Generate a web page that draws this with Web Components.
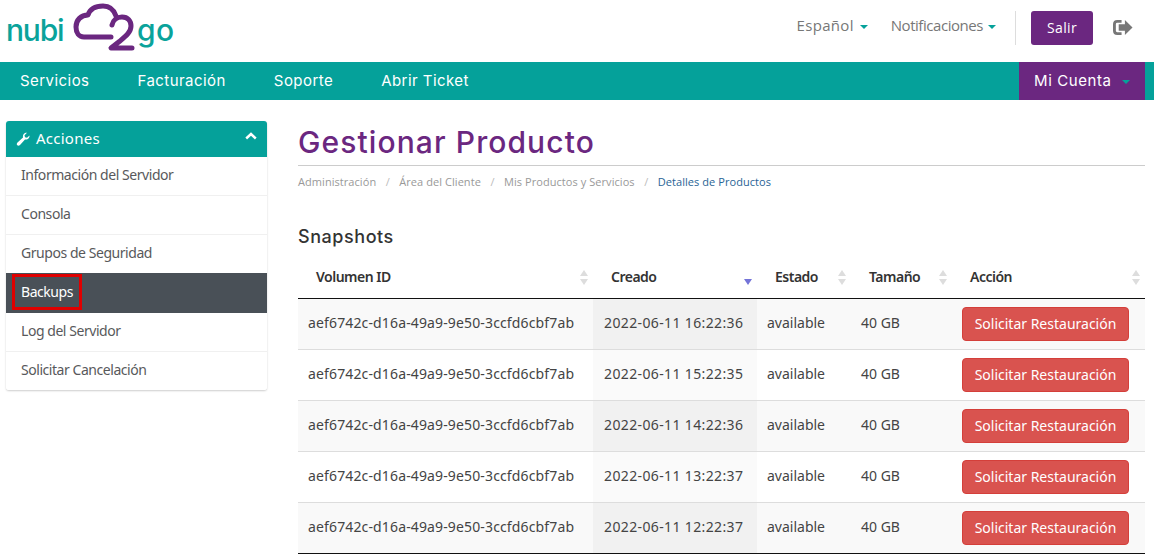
<!DOCTYPE html>
<html lang="es">
<head>
<meta charset="utf-8">
<title>Gestionar Producto</title>
<style>
    html, body { margin: 0; padding: 0; background: #fff; height: 559px; overflow: hidden; }
    body { font-family: "Noto Sans", sans-serif; color: #333; }
</style>
</head>
<body>
<template id="tpl-header">
<style>
    :host { display: block; height: 62px; }
    .bar { display: flex; align-items: flex-start; height: 62px; padding-right: 21px; box-sizing: border-box; }
    .logo { display: block; }
    .logo text { font-family: Inter, sans-serif; font-weight: 500; font-size: 30px; fill: #0aa39b; }
    .right { margin-left: auto; height: 56px; display: flex; align-items: center; font: 15px "Open Sans", sans-serif; color: #777; }
    .drop { display: flex; align-items: center; gap: 6px; margin-right: 19px; margin-top: -6px; }
    .lang { margin-right: 23px; letter-spacing: .3px; }
    .notif { letter-spacing: -.45px; gap: 5px; }
    .caret { width: 0; height: 0; border: 4px solid transparent; border-top-color: #05a19a; border-bottom: 0; margin-top: 4px; }
    .sep { width: 1px; height: 34px; background: #ddd; margin-right: 15px; }
    .salir { background: #6b2780; color: #fff; border-radius: 3px; width: 62px; height: 34px; padding-bottom: 2px; box-sizing: border-box; display: flex; align-items: center; justify-content: center; font-size: 14px; letter-spacing: .35px; margin-right: 20px; }
    svg.out { display: block; margin-top: -1px; }
</style>
<div class="bar">
    <svg class="logo" width="180" height="56" viewBox="0 0 180 56">
        <text x="6" y="41" letter-spacing="-1.2">nubi</text>
        <text x="137" y="41" letter-spacing=".5">go</text>
        <path d="M111 37H84c-5 0-8-4-8-10 0-7 5-12 12-12 2-6 8-9 15-9 7 0 11 4 13 10" fill="none" stroke="#6b2780" stroke-width="5" stroke-linecap="round" stroke-linejoin="round"/>
        <path d="M112 25c1-5 5-8 10-8 6 0 9 4 9 9 0 6-5 10-11 15l-9 7h21" fill="none" stroke="#6b2780" stroke-width="5" stroke-linecap="round" stroke-linejoin="round"/>
    </svg>
    <div class="right">
        <div class="drop lang">Español <span class="caret"></span></div>
        <div class="drop notif">Notificaciones <span class="caret"></span></div>
        <div class="sep"></div>
        <div class="salir">Salir</div>
        <svg class="out" width="20" height="17" viewBox="0 0 21 17">
            <path d="M9 2H4.500C2.500 2 1.500 3 1.500 5v7c0 2 1 3 3 3H9" fill="none" stroke="#777" stroke-width="3"/>
            <path d="M6 5h6.500V.5L20.500 8.500l-8 8V12H6z" fill="#777"/>
        </svg>
    </div>
</div>
</template>

<template id="tpl-nav">
<style>
    :host { display: flex; height: 38px; background: #05a19a; padding-right: 9px; font: 15px Inter, sans-serif; color: #fff; }
    .links { display: flex; gap: 48px; padding: 0 0 1px 20px; align-items: center; flex: 1; letter-spacing: .45px; }
    .acct { background: #6b2780; width: 126px; display: flex; align-items: center; gap: 10px; padding: 0 0 1px 15px; box-sizing: border-box; letter-spacing: .6px; }
    .caret { width: 0; height: 0; border: 4px solid transparent; border-top-color: #05a19a; border-bottom: 0; margin-top: 3px; }
</style>
<div class="links"><slot></slot></div>
<div class="acct">Mi Cuenta <span class="caret"></span></div>
</template>

<template id="tpl-panel">
<style>
    :host { display: block; width: 261px; margin: 21px 0 0 6px; border-radius: 3px; box-shadow: 0 1px 2px rgba(0,0,0,.2); font: 14px "Noto Sans", sans-serif; letter-spacing: -.45px; color: #58595b; }
    .head { background: #05a19a; color: #fff; height: 36px; border-radius: 3px 3px 0 0; display: flex; align-items: center; padding: 0 10px; font-size: 15px; letter-spacing: .25px; gap: 6px; }
    .head span { margin-top: -3px; }
    .head svg.up { margin-left: auto; margin-top: -6px; }
</style>
<div class="head">
    <svg width="14" height="14" viewBox="0 0 14 14"><path d="M13.500 3.500c.3 2-1.500 4.600-4.500 4L4 13c-1 1-2 1-2.700.3S.6 11.600 1.500 10.500L7 5.500C6.500 2.500 8.500.5 11 .7L8.500 3.300l.5 2 2 .5z" fill="#fff"/></svg>
    <span>Acciones</span>
    <svg class="up" width="12" height="8" viewBox="0 0 12 8"><path d="M1.200 6.500 6 2l4.800 4.500" fill="none" stroke="#fff" stroke-width="2.400"/></svg>
</div>
<slot></slot>
</template>

<template id="tpl-item">
<style>
    :host { display: flex; align-items: center; height: 38px; padding-left: 15px; background: #fff; border-bottom: 1px solid #f0f0f0; }
    :host([active]) { background: #495057; color: #fff; height: 40px; border-bottom: 0; margin-top: -1px; position: relative; }
    :host(:last-child) { border-bottom: 0; border-radius: 0 0 3px 3px; }
    .mark { display: flex; align-items: center; margin-top: -4px; }
    :host([marked]) .mark { outline: 3px solid #e00000; height: 30px; width: 64px; box-sizing: border-box; padding: 0 0 2px 6px; margin: -2px 0 0 -6px; }
</style>
<span class="mark"><slot></slot></span>
</template>

<template id="tpl-table">
<style>
    :host { display: block; font: 14px "Noto Sans", sans-serif; color: #444; }
    .grid { display: grid; grid-template-columns: 295px 164px 94px 101px 193px; }
</style>
<div class="grid"><slot></slot></div>
</template>

<template id="tpl-th">
<style>
    :host { display: flex; align-items: center; height: 42px; border-bottom: 1px solid #111; padding-left: 18px; padding-right: 5px; font-weight: 600; font-size: 14px; letter-spacing: -.5px; color: #333; margin-top: 8px; }
    .label { margin-top: -2px; }
    .sort { margin-left: auto; display: flex; flex-direction: column; gap: 3px; }
    .sort i { width: 0; height: 0; border: 4.500px solid transparent; display: block; }
    .sort .u { border-top: 0; border-bottom: 6px solid #ddd; }
    .sort .d { border-bottom: 0; border-top: 6px solid #ddd; }
    :host([sorted]) .sort .u { visibility: hidden; }
    :host([sorted]) .sort .d { border-top-color: #7474d8; }
</style>
<span class="label"><slot></slot></span>
<span class="sort"><i class="u"></i><i class="d"></i></span>
</template>

<template id="tpl-td">
<style>
    :host { display: flex; align-items: center; height: 50px; padding-left: 10px; border-bottom: 1px solid #ddd; background: #fff; }
    :host([odd]) { background: #f9f9f9; }
    :host([sorted]) { background: #fafafa; padding-left: 11px; letter-spacing: .37px; }
    :host([sorted][odd]) { background: #f1f1f1; }
    :host([code]) { letter-spacing: .14px; }
    :host([last]) { border-bottom-color: #111; }
    span { margin-top: -3px; }
    :host([action]) span { margin-top: -1px; }
</style>
<span><slot></slot></span>
</template>

<template id="tpl-btn">
<style>
    :host { display: flex; align-items: center; justify-content: center; width: 167px; height: 34px; background: #d9534f; color: #fff; border: 1px solid #d43f3a; border-radius: 4px; box-sizing: border-box; font-size: 14px; }
</style>
<slot></slot>
</template>

<template id="tpl-main">
<style>
    :host { display: flex; align-items: flex-start; }
    .content { margin-left: 31px; width: 847px; }
    h1 { margin: 22px 0 0; font: 500 30px Inter, sans-serif; letter-spacing: 1.1px; color: #6b2780; height: 43px; line-height: 41px; border-bottom: 1px solid #ccc; }
    .crumbs { display: flex; font: 11px "Open Sans", sans-serif; letter-spacing: .06px; color: #999; margin-top: 8px; height: 15px; align-items: center; }
    .crumbs span.s { margin: 0 9.500px; color: #bbb; }
    .crumbs .on { color: #2a6496; }
    h2 { margin: 37px 0 0; font: 500 18px Inter, sans-serif; letter-spacing: .55px; line-height: 22px; color: #333; }
</style>
<slot name="side"></slot>
<div class="content">
    <h1>Gestionar Producto</h1>
    <div class="crumbs"><span>Administración</span><span class="s">/</span><span>Área del Cliente</span><span class="s">/</span><span>Mis Productos y Servicios</span><span class="s">/</span><span class="on">Detalles de Productos</span></div>
    <h2>Snapshots</h2>
    <slot></slot>
</div>
</template>

<site-header></site-header>
<site-nav><span>Servicios</span><span>Facturación</span><span>Soporte</span><span>Abrir Ticket</span></site-nav>
<main-area>
    <side-panel slot="side">
        <side-item>Información del Servidor</side-item>
        <side-item>Consola</side-item>
        <side-item>Grupos de Seguridad</side-item>
        <side-item active marked>Backups</side-item>
        <side-item>Log del Servidor</side-item>
        <side-item>Solicitar Cancelación</side-item>
    </side-panel>
    <snap-table id="t"></snap-table>
</main-area>

<script>
    function plain(name, tplId) {
        const template = document.getElementById(tplId);
        customElements.define(name, class extends HTMLElement {
            constructor() {
                super();
                this.attachShadow({ mode: 'open' }).appendChild(template.content.cloneNode(true));
            }
        });
    }

    plain('site-header', 'tpl-header');
    plain('site-nav', 'tpl-nav');
    plain('side-panel', 'tpl-panel');
    plain('side-item', 'tpl-item');
    plain('main-area', 'tpl-main');
    plain('snap-table', 'tpl-table');
    plain('snap-th', 'tpl-th');
    plain('snap-td', 'tpl-td');
    plain('snap-btn', 'tpl-btn');

    const rows = [
        '2022-06-11 16:22:36', '2022-06-11 15:22:35', '2022-06-11 14:22:36',
        '2022-06-11 13:22:37', '2022-06-11 12:22:37'
    ];
    const table = document.getElementById('t');
    ['Volumen ID', 'Creado', 'Estado', 'Tamaño', 'Acción'].forEach((h, i) => {
        const th = document.createElement('snap-th');
        th.textContent = h;
        if (i === 1) th.setAttribute('sorted', '');
        table.appendChild(th);
    });
    rows.forEach((date, r) => {
        const cells = ['aef6742c-d16a-49a9-9e50-3ccfd6cbf7ab', date, 'available', '40 GB', null];
        cells.forEach((text, i) => {
            const td = document.createElement('snap-td');
            if (r % 2 === 0) td.setAttribute('odd', '');
            if (i === 0) td.setAttribute('code', '');
            if (i === 1) td.setAttribute('sorted', '');
            if (r === rows.length - 1) td.setAttribute('last', '');
            if (text === null) {
                td.setAttribute('action', '');
                const btn = document.createElement('snap-btn');
                btn.textContent = 'Solicitar Restauración';
                td.appendChild(btn);
            } else {
                td.textContent = text;
            }
            table.appendChild(td);
        });
    });
</script>
</body>
</html>
